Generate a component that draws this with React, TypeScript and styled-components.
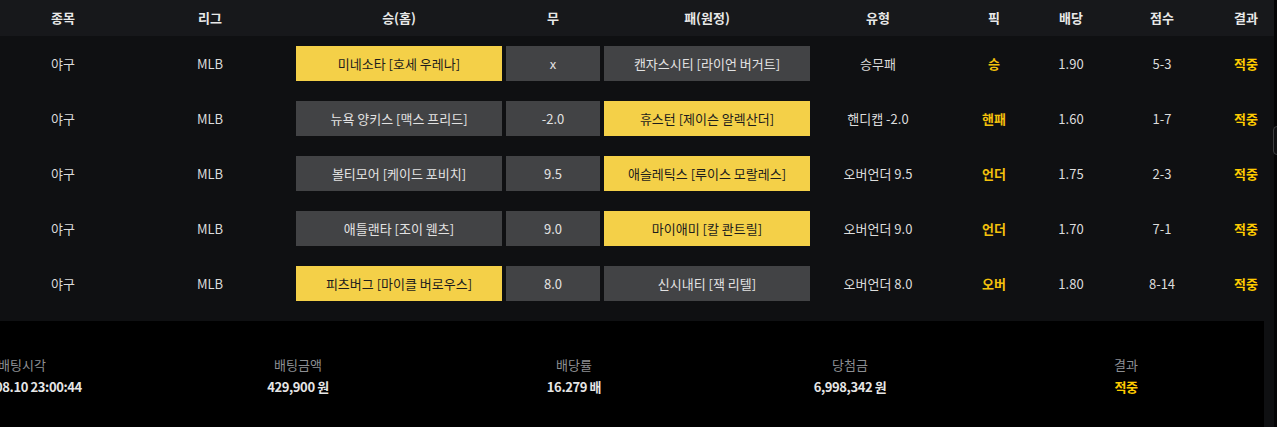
import React from "react";
import styled, { createGlobalStyle } from "styled-components";

const GlobalStyle = createGlobalStyle`
  html, body {
    margin: 0;
    padding: 0;
    background: #050506;
    overflow: hidden;
  }
  body {
    font-family: "Noto Sans CJK KR", "Noto Sans", sans-serif;
    font-size: 13px;
    color: #e4e4e4;
  }
`;

const COLS = "126px 168px 210px 98px 210px 132px 100px 54px 128px 40px";

const Panel = styled.div`
  width: 1274px;
  height: 427px;
  background: #0f1012;
  overflow: hidden;
  position: relative;
`;

const HeadRow = styled.div`
  display: grid;
  grid-template-columns: ${COLS};
  height: 36px;
  align-items: center;
  background: #17181b;
  font-weight: 700;
  color: #e8e8e8;
  text-align: center;
  padding-bottom: 2px;
  box-sizing: border-box;
`;

const Rows = styled.div`
  padding-bottom: 10px;
`;

const Row = styled.div`
  display: grid;
  grid-template-columns: ${COLS};
  height: 55px;
  align-items: center;
  text-align: center;
`;

const Cell = styled.div<{ $tone?: "pick" | "win" }>`
  color: ${(p) => (p.$tone === "win" ? "#ffcc00" : p.$tone ? "#f5c20c" : "#dcdcdc")};
  font-weight: ${(p) => (p.$tone ? 700 : 400)};
`;

const Team = styled.div<{ $on?: boolean }>`
  margin: 0 2px;
  height: 35px;
  display: flex;
  align-items: center;
  justify-content: center;
  background: ${(p) => (p.$on ? "#f4d048" : "#424345")};
  color: ${(p) => (p.$on ? "#1c1c1c" : "#e2e2e2")};
  white-space: nowrap;
`;

const Summary = styled.div`
  width: 1380px;
  margin-left: -116px;
  height: 106px;
  background: #000;
  display: grid;
  grid-template-columns: repeat(5, 1fr);
  align-content: center;
  text-align: center;
`;

const Stat = styled.div`
  display: flex;
  flex-direction: column;
  gap: 3px;
  padding-top: 2px;
`;

const StatLabel = styled.div`
  color: #8d8f93;
`;

const StatValue = styled.div<{ $win?: boolean }>`
  font-weight: 700;
  letter-spacing: -0.4px;
  color: ${(p) => (p.$win ? "#ffcc00" : "#e6e6e6")};
`;

const EdgeTab = styled.div`
  position: absolute;
  left: 1273px;
  top: 126px;
  width: 20px;
  height: 27px;
  border: 1px solid #3c3d40;
  border-radius: 4px;
  background: #0f1012;
`;

type Bet = {
  home: string;
  mid: string;
  away: string;
  homeOn: boolean;
  kind: string;
  pick: string;
  odds: string;
  score: string;
};

const bets: Bet[] = [
  { home: "미네소타 [호세 우레나]", mid: "x", away: "캔자스시티 [라이언 버거트]", homeOn: true, kind: "승무패", pick: "승", odds: "1.90", score: "5-3" },
  { home: "뉴욕 양키스 [맥스 프리드]", mid: "-2.0", away: "휴스턴 [제이슨 알렉산더]", homeOn: false, kind: "핸디캡 -2.0", pick: "핸패", odds: "1.60", score: "1-7" },
  { home: "볼티모어 [케이드 포비치]", mid: "9.5", away: "애슬레틱스 [루이스 모랄레스]", homeOn: false, kind: "오버언더 9.5", pick: "언더", odds: "1.75", score: "2-3" },
  { home: "애틀랜타 [조이 웬츠]", mid: "9.0", away: "마이애미 [칼 콴트릴]", homeOn: false, kind: "오버언더 9.0", pick: "언더", odds: "1.70", score: "7-1" },
  { home: "피츠버그 [마이클 버로우스]", mid: "8.0", away: "신시내티 [잭 리텔]", homeOn: true, kind: "오버언더 8.0", pick: "오버", odds: "1.80", score: "8-14" },
];

const heads = ["종목", "리그", "승(홈)", "무", "패(원정)", "유형", "픽", "배당", "점수", "결과"];

export default function App() {
  return (
    <>
      <GlobalStyle />
      <Panel>
        <HeadRow>
          {heads.map((h) => (
            <div key={h}>{h}</div>
          ))}
        </HeadRow>
        <Rows>
          {bets.map((b, i) => (
            <Row key={i}>
              <Cell>야구</Cell>
              <Cell>MLB</Cell>
              <Team $on={b.homeOn}>{b.home}</Team>
              <Team>{b.mid}</Team>
              <Team $on={!b.homeOn}>{b.away}</Team>
              <Cell>{b.kind}</Cell>
              <Cell $tone="pick">{b.pick}</Cell>
              <Cell>{b.odds}</Cell>
              <Cell>{b.score}</Cell>
              <Cell $tone="win">적중</Cell>
            </Row>
          ))}
        </Rows>
        <Summary>
          <Stat>
            <StatLabel>배팅시각</StatLabel>
            <StatValue>2025.08.10 23:00:44</StatValue>
          </Stat>
          <Stat>
            <StatLabel>배팅금액</StatLabel>
            <StatValue>429,900 원</StatValue>
          </Stat>
          <Stat>
            <StatLabel>배당률</StatLabel>
            <StatValue>16.279 배</StatValue>
          </Stat>
          <Stat>
            <StatLabel>당첨금</StatLabel>
            <StatValue>6,998,342 원</StatValue>
          </Stat>
          <Stat>
            <StatLabel>결과</StatLabel>
            <StatValue $win>적중</StatValue>
          </Stat>
        </Summary>
      </Panel>
      <EdgeTab />
    </>
  );
}
